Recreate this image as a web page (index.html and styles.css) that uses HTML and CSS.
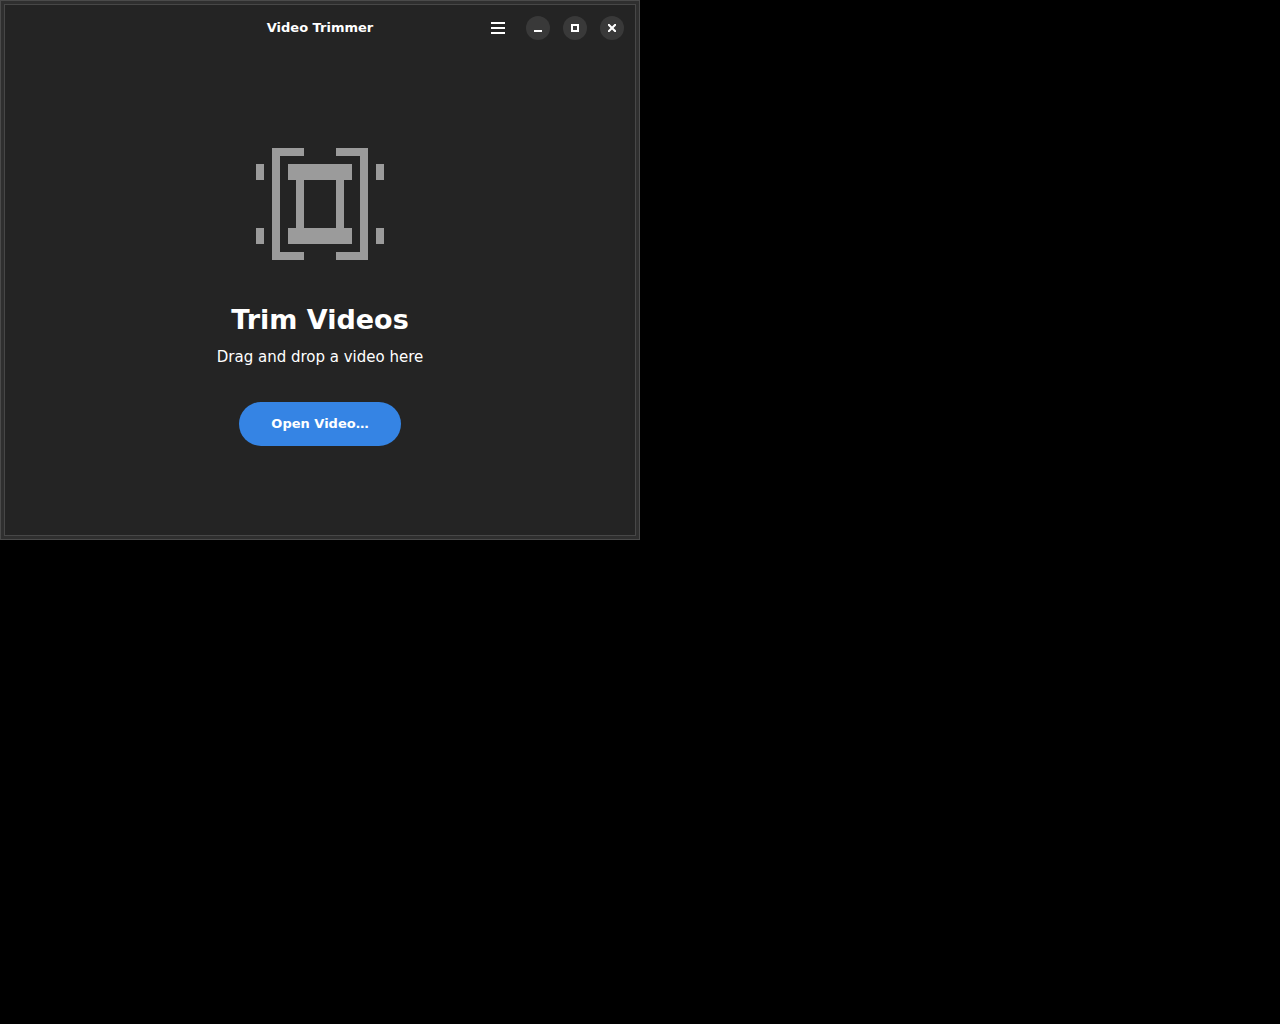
FILE: index.html
```html
<!DOCTYPE html>
<html lang="en">
<head>
<meta charset="utf-8">
<title>Video Trimmer</title>
<link rel="stylesheet" href="styles.css">
</head>
<body>
<div class="frame">
  <div class="window">
    <header class="header">
      <h1 class="title">Video Trimmer</h1>
      <div class="controls">
        <button class="menu" type="button" aria-label="Main menu">
          <svg width="16" height="16" viewBox="0 0 16 16" aria-hidden="true"><path d="M1 2h14v2H1zM1 7h14v2H1zM1 12h14v2H1z"/></svg>
        </button>
        <button class="control" type="button" aria-label="Minimize">
          <svg width="16" height="16" viewBox="0 0 16 16" aria-hidden="true"><path d="M4 10h8v2H4z"/></svg>
        </button>
        <button class="control" type="button" aria-label="Maximize">
          <svg width="16" height="16" viewBox="0 0 16 16" aria-hidden="true"><path fill-rule="evenodd" d="M4 4h8v8H4zM6 6v4h4V6z"/></svg>
        </button>
        <button class="control" type="button" aria-label="Close">
          <svg width="16" height="16" viewBox="0 0 16 16" aria-hidden="true"><path d="M4 4h1.5L8 6.5 10.500 4H12v1.500L9.500 8 12 10.500V12h-1.500L8 9.500 5.500 12H4v-1.500L6.500 8 4 5.500z"/></svg>
        </button>
      </div>
    </header>
    <main class="status">
      <svg class="status-icon" width="128" height="112" viewBox="0 0 16 14" shape-rendering="crispEdges" aria-hidden="true">
        <path d="M0 2h1v2H0zM0 10h1v2H0zM15 2h1v2h-1zM15 10h1v2h-1z"/>
        <path d="M2 0h4v1H3v12h3v1H2zM14 0h-4v1h3v12h-3v1h4z"/>
        <path fill-rule="evenodd" d="M4 2h8v2h-1v6h1v2H4v-2h1V4H4zM6 4v6h4V4z"/>
      </svg>
      <h2 class="heading">Trim Videos</h2>
      <p class="hint">Drag and drop a video here</p>
      <button class="open" type="button">Open Video…</button>
    </main>
  </div>
</div>
</body>
</html>
```
FILE: styles.css
```css
* {
  box-sizing: border-box;
}

body {
  margin: 0;
  background: #000;
  color: #fff;
  font-family: "DejaVu Sans", sans-serif;
}

.frame {
  width: 50%;
  min-width: 480px;
  padding: 3px;
  border: 1px solid #4a4a4a;
  background: #2f2f2f;
}

.window {
  border: 1px solid #474747;
  background: #242424;
}

.header {
  display: grid;
  grid-template-columns: 1fr auto 1fr;
  align-items: center;
  height: 46px;
  padding: 0 11px;
}

.title {
  grid-column: 2;
  margin: 0;
  font-size: 13px;
  line-height: 16px;
  font-weight: bold;
}

.controls {
  display: flex;
  align-items: center;
  justify-content: flex-end;
  gap: 13px;
}

.menu,
.control {
  display: flex;
  align-items: center;
  justify-content: center;
  height: 24px;
  padding: 0;
  border: 0;
  background: none;
  fill: #fff;
}

.menu {
  width: 30px;
}

.control {
  width: 24px;
  border-radius: 50%;
  background: #393939;
}

.status {
  display: flex;
  flex-direction: column;
  align-items: center;
  padding: 97px 24px 89px;
}

.status-icon {
  fill: #9b9b9b;
}

.heading {
  margin: 44px 0 0;
  font-size: 27px;
  line-height: 32px;
  font-weight: bold;
}

.hint {
  margin: 12px 0 0;
  font-size: 15px;
  line-height: 18px;
}

.open {
  height: 44px;
  margin-top: 36px;
  padding: 0 32px;
  border: 0;
  border-radius: 22px;
  background: #3584e4;
  color: #fff;
  font: bold 13px/16px "DejaVu Sans", sans-serif;
}
```
